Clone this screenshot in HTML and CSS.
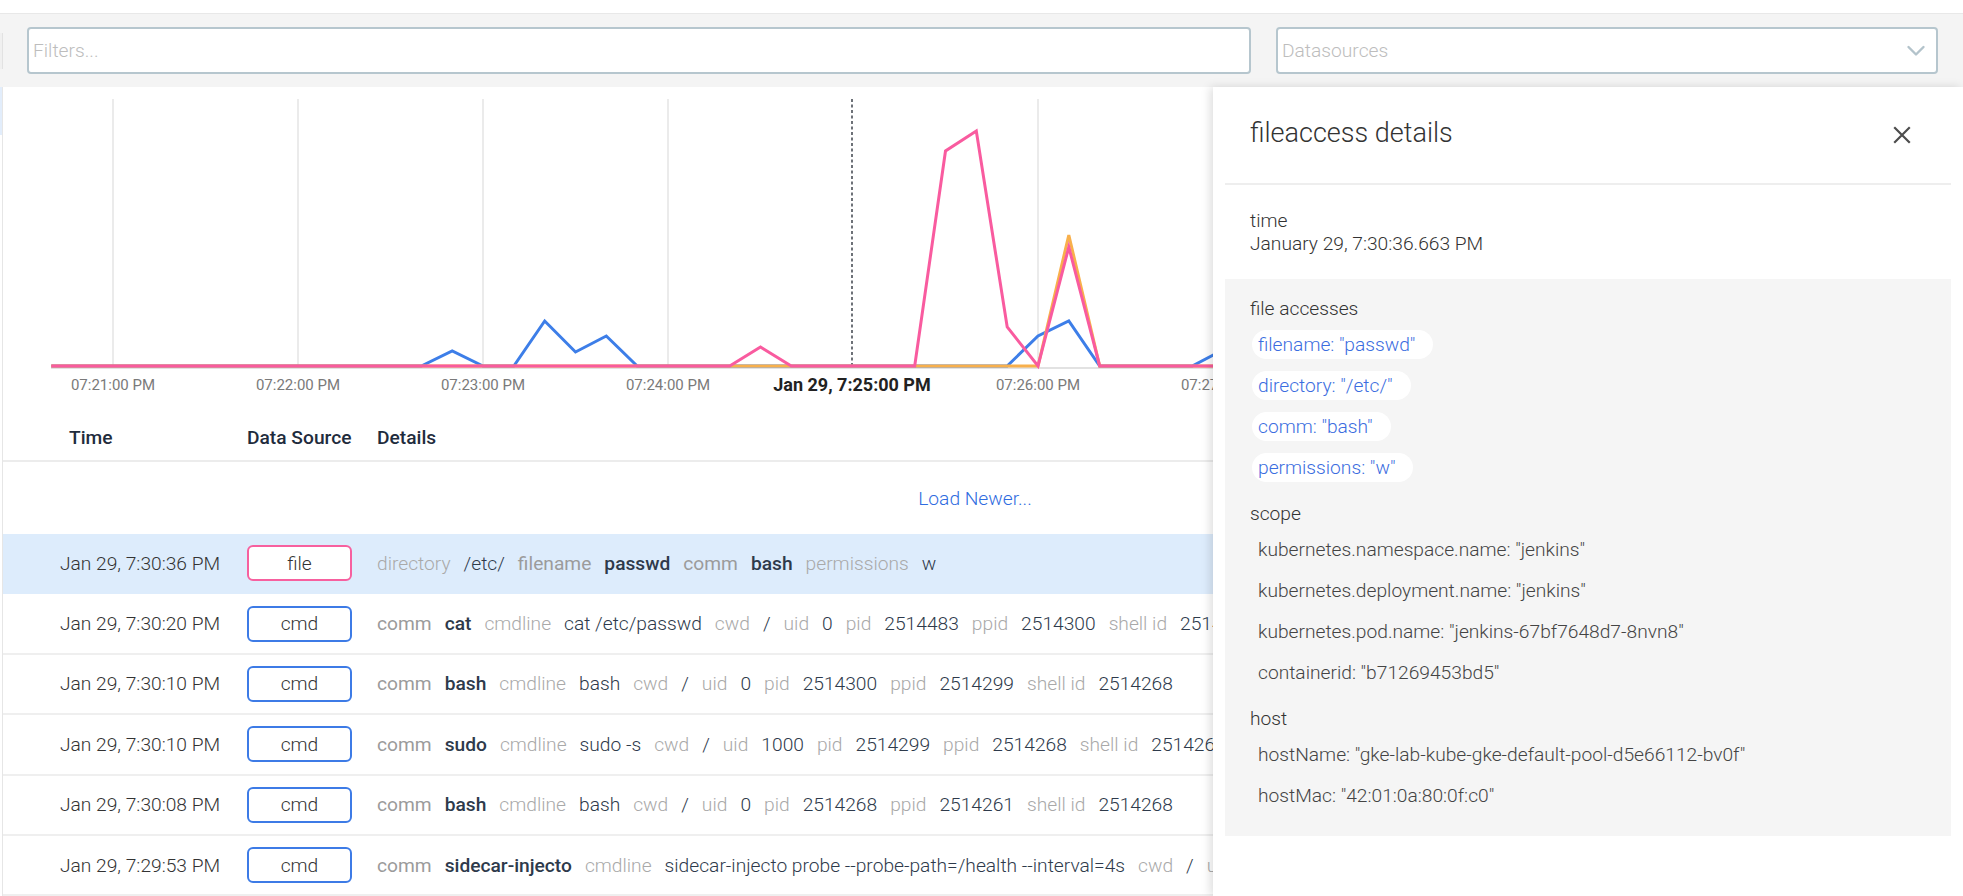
FILE: index.html
```html
<!DOCTYPE html>
<html lang="en">
<head>
<meta charset="utf-8">
<title>Events</title>
<link rel="stylesheet" href="styles.css">
</head>
<body>
<div class="topgap"></div>
<div class="toolbar">
  <div class="tb-edge"></div>
  <div class="field filter"><span class="placeholder">Filters...</span></div>
  <div class="field select">
    <span class="placeholder">Datasources</span>
    <svg class="chev" width="20" height="12" viewBox="0 0 20 12"><path d="M2.5 2 L10 9.5 L17.5 2" fill="none" stroke="#b3c3cb" stroke-width="2.4" stroke-linecap="round" stroke-linejoin="round"/></svg>
  </div>
</div>
<div class="main">
  <div class="edge"><div class="edge-top"></div></div>
  <div class="content">
    <div class="chart">
      <svg class="chart-svg" width="1960" height="323" viewBox="0 0 1960 323">
        <g stroke="#e4e4e4" stroke-width="1.5">
          <line x1="110" y1="12" x2="110" y2="279"/>
          <line x1="295" y1="12" x2="295" y2="279"/>
          <line x1="480" y1="12" x2="480" y2="279"/>
          <line x1="665" y1="12" x2="665" y2="279"/>
          <line x1="1035" y1="12" x2="1035" y2="279"/>
          <line x1="1220" y1="12" x2="1220" y2="279"/>
          <line x1="1405" y1="12" x2="1405" y2="279"/>
          <line x1="1590" y1="12" x2="1590" y2="279"/>
          <line x1="1775" y1="12" x2="1775" y2="279"/>
        </g>
        <line x1="48" y1="281" x2="1960" y2="281" stroke="#e2e2e2" stroke-width="2"/>
        <line x1="849" y1="12" x2="849" y2="279" stroke="#4a4f57" stroke-width="1.6" stroke-dasharray="3 2.5"/>
        <polyline fill="none" stroke="#3d7ee8" stroke-width="3" points="48.3,279 418.3,279 449.2,264 480,279 510.8,279 541.7,234 572.5,265 603.3,249 634.2,279 1004.2,279 1035,249 1065.8,234 1096.7,279 1189.2,279 1220,263 1250.8,279 1960,279"/>
        <polyline fill="none" stroke="#f8b04c" stroke-width="3" points="48.3,279 1035,279 1065.8,148 1096.7,279 1960,279"/>
        <polyline fill="none" stroke="#f95b9f" stroke-width="3" points="48.3,279 726.7,279 757.5,260 788.3,279 911.7,279 942.5,64 973.3,44 1004.2,240 1035,279 1065.8,160 1096.7,279 1960,279"/>
        <g class="axis-label" text-anchor="middle">
          <text x="110" y="303">07:21:00 PM</text>
          <text x="295" y="303">07:22:00 PM</text>
          <text x="480" y="303">07:23:00 PM</text>
          <text x="665" y="303">07:24:00 PM</text>
          <text x="1035" y="303">07:26:00 PM</text>
          <text x="1220" y="303">07:27:00 PM</text>
        </g>
        <text class="axis-current" x="849" y="304" text-anchor="middle">Jan 29, 7:25:00 PM</text>
      </svg>
    </div>

    <div class="thead">
      <div class="th th-time">Time</div>
      <div class="th">Data Source</div>
      <div class="th">Details</div>
    </div>

    <div class="load"><span class="load-link">Load Newer...</span></div>

    <div class="row selected">
      <div class="c-time">Jan 29, 7:30:36 PM</div>
      <div class="c-src"><span class="badge badge-file">file</span></div>
      <div class="c-det"><span class="k">directory</span><span class="v">/etc/</span><span class="k k2">filename</span><span class="v b">passwd</span><span class="k k2">comm</span><span class="v b">bash</span><span class="k">permissions</span><span class="v">w</span></div>
    </div>
    <div class="row">
      <div class="c-time">Jan 29, 7:30:20 PM</div>
      <div class="c-src"><span class="badge badge-cmd">cmd</span></div>
      <div class="c-det"><span class="k k2">comm</span><span class="v b">cat</span><span class="k">cmdline</span><span class="v">cat /etc/passwd</span><span class="k">cwd</span><span class="v">/</span><span class="k">uid</span><span class="v">0</span><span class="k">pid</span><span class="v">2514483</span><span class="k">ppid</span><span class="v">2514300</span><span class="k">shell id</span><span class="v">2514268</span></div>
    </div>
    <div class="row">
      <div class="c-time">Jan 29, 7:30:10 PM</div>
      <div class="c-src"><span class="badge badge-cmd">cmd</span></div>
      <div class="c-det"><span class="k k2">comm</span><span class="v b">bash</span><span class="k">cmdline</span><span class="v">bash</span><span class="k">cwd</span><span class="v">/</span><span class="k">uid</span><span class="v">0</span><span class="k">pid</span><span class="v">2514300</span><span class="k">ppid</span><span class="v">2514299</span><span class="k">shell id</span><span class="v">2514268</span></div>
    </div>
    <div class="row">
      <div class="c-time">Jan 29, 7:30:10 PM</div>
      <div class="c-src"><span class="badge badge-cmd">cmd</span></div>
      <div class="c-det"><span class="k k2">comm</span><span class="v b">sudo</span><span class="k">cmdline</span><span class="v">sudo -s</span><span class="k">cwd</span><span class="v">/</span><span class="k">uid</span><span class="v">1000</span><span class="k">pid</span><span class="v">2514299</span><span class="k">ppid</span><span class="v">2514268</span><span class="k">shell id</span><span class="v">2514268</span></div>
    </div>
    <div class="row">
      <div class="c-time">Jan 29, 7:30:08 PM</div>
      <div class="c-src"><span class="badge badge-cmd">cmd</span></div>
      <div class="c-det"><span class="k k2">comm</span><span class="v b">bash</span><span class="k">cmdline</span><span class="v">bash</span><span class="k">cwd</span><span class="v">/</span><span class="k">uid</span><span class="v">0</span><span class="k">pid</span><span class="v">2514268</span><span class="k">ppid</span><span class="v">2514261</span><span class="k">shell id</span><span class="v">2514268</span></div>
    </div>
    <div class="row">
      <div class="c-time">Jan 29, 7:29:53 PM</div>
      <div class="c-src"><span class="badge badge-cmd">cmd</span></div>
      <div class="c-det"><span class="k k2">comm</span><span class="v b">sidecar-injecto</span><span class="k">cmdline</span><span class="v">sidecar-injecto probe --probe-path=/health --interval=4s</span><span class="k">cwd</span><span class="v">/</span><span class="k">uid</span><span class="v">0</span><span class="k">pid</span><span class="v">2514102</span></div>
    </div>
  </div>
</div>

<aside class="panel">
  <div class="p-head">
    <div class="p-title">fileaccess details</div>
    <svg class="p-close" width="18" height="18" viewBox="0 0 18 18"><path d="M2 2 L16 16 M16 2 L2 16" stroke="#4d4d4d" stroke-width="2.2" stroke-linecap="square"/></svg>
  </div>
  <div class="p-divider"></div>
  <div class="p-time">
    <div class="g-label">time</div>
    <div class="g-label">January 29, 7:30:36.663 PM</div>
  </div>
  <div class="p-gray">
    <div class="group">
      <div class="g-label">file accesses</div>
      <div class="chips">
        <span class="chip">filename: "passwd"</span>
        <span class="chip">directory: "/etc/"</span>
        <span class="chip">comm: "bash"</span>
        <span class="chip">permissions: "w"</span>
      </div>
    </div>
    <div class="group">
      <div class="g-label">scope</div>
      <div class="chips">
        <span class="chip plain">kubernetes.namespace.name: "jenkins"</span>
        <span class="chip plain">kubernetes.deployment.name: "jenkins"</span>
        <span class="chip plain">kubernetes.pod.name: "jenkins-67bf7648d7-8nvn8"</span>
        <span class="chip plain">containerid: "b71269453bd5"</span>
      </div>
    </div>
    <div class="group">
      <div class="g-label">host</div>
      <div class="chips">
        <span class="chip plain">hostName: "gke-lab-kube-gke-default-pool-d5e66112-bv0f"</span>
        <span class="chip plain">hostMac: "42:01:0a:80:0f:c0"</span>
      </div>
    </div>
  </div>
</aside>
</body>
</html>
```

FILE: styles.css
```css
html, body {
  margin: 0;
  padding: 0;
  overflow: hidden;
  height: 896px;
}
body {
  position: relative;
  font-family: Roboto, "Noto Sans", "Liberation Sans", sans-serif;
  font-size: 19.2px;
  font-weight: 300;
  color: #333;
  background: #fff;
}

.topgap {
  height: 13px;
  background: #fff;
}

.toolbar {
  height: 73px;
  border-top: 1px solid #e8e8e8;
  background: #f4f4f4;
  display: flex;
  align-items: center;
  padding-right: 25px;
}
.tb-edge {
  flex: 0 0 2px;
  height: 36px;
  background: #f0f0f0;
  border-right: 1px solid #e2e2e2;
}
.field {
  box-sizing: border-box;
  height: 47px;
  border: 2px solid #b6c6ce;
  border-radius: 4px;
  background: #fff;
  display: flex;
  align-items: center;
  padding: 0 4px;
}
.filter {
  flex: 0 0 1224px;
  margin-left: 24px;
}
.select {
  flex: 1;
  margin-left: 25px;
  justify-content: space-between;
  padding-right: 10px;
}
.placeholder {
  color: #bdbdbd;
  font-weight: 300;
  font-size: 19.2px;
}
.chev {
  display: block;
}

.main {
  display: flex;
}
.edge {
  flex: 0 0 2px;
  border-right: 1px solid #e6e6e6;
  background: #fff;
}
.edge-top {
  height: 48px;
  background: #e2edfb;
}
.content {
  flex: 1;
  min-width: 0;
}

.chart {
  height: 323px;
}
.chart-svg {
  display: block;
}
.axis-label {
  font-family: Roboto, "Liberation Sans", sans-serif;
  font-size: 15px;
  font-weight: 400;
  fill: #7a7a7a;
}
.axis-current {
  font-family: Roboto, "Liberation Sans", sans-serif;
  font-size: 18px;
  font-weight: 700;
  fill: #222;
}

.thead {
  display: grid;
  grid-template-columns: 244px 130px 1fr;
  align-items: center;
  box-sizing: border-box;
  height: 52px;
  padding-top: 4px;
  border-bottom: 2px solid #ececec;
}
.th {
  font-weight: 500;
  color: #1f2c3d;
}
.th-time {
  padding-left: 66px;
}

.load {
  height: 72px;
  display: flex;
  align-items: center;
  justify-content: center;
  padding-right: 16px;
}
.load-link {
  color: #2f6ce0;
  font-weight: 300;
}

.row {
  display: grid;
  grid-template-columns: 244px 130px 1fr;
  align-items: center;
  height: 58.4px;
  border-bottom: 2px solid #efefef;
}
.row.selected {
  background: #ddecfc;
  border-bottom-color: #ddecfc;
}
.c-time {
  padding-left: 57px;
  color: #333;
  white-space: nowrap;
}
.badge {
  box-sizing: border-box;
  width: 105px;
  height: 36px;
  border: 2px solid #3d7be6;
  border-radius: 6px;
  background: #fff;
  display: flex;
  align-items: center;
  justify-content: center;
  color: #333;
  font-weight: 300;
}
.badge-file {
  border-color: #f7609f;
}
.c-det {
  white-space: nowrap;
  overflow: hidden;
}
.k, .v {
  display: inline-block;
  margin-right: 13px;
}
.k {
  color: #a9a9a9;
  font-weight: 300;
}
.k2 {
  color: #9b9b9b;
  font-weight: 400;
}
.v {
  color: #2e3a4b;
  font-weight: 300;
}
.v.b {
  font-weight: 500;
}

.panel {
  position: absolute;
  top: 87px;
  left: 1213px;
  width: 750px;
  height: 809px;
  background: #fff;
  box-shadow: -3px 0 9px rgba(0, 0, 0, 0.13);
}
.p-head {
  height: 92px;
  display: flex;
  align-items: center;
  justify-content: space-between;
  padding: 0 52px 0 37px;
}
.p-title {
  font-size: 27px;
  font-weight: 300;
  color: #333;
}
.p-close {
  display: block;
  margin-top: 4px;
}
.p-divider {
  height: 2px;
  background: #eeeeee;
  margin: 4px 12px 0;
}
.p-time {
  padding: 24px 37px;
}
.g-label {
  line-height: 23px;
  color: #333;
  font-weight: 300;
}
.p-gray {
  margin: 0 12px;
  background: #f5f5f5;
  padding: 18px 25px 26px;
}
.group + .group {
  margin-top: 20px;
}
.chips {
  display: flex;
  flex-direction: column;
  align-items: flex-start;
  gap: 12px;
  margin-top: 10px;
  padding-left: 2px;
}
.chip {
  height: 29px;
  line-height: 29px;
  padding: 0 18px 0 6px;
  border-radius: 15px;
  background: #fff;
  color: #3b6de0;
  font-weight: 300;
  white-space: nowrap;
}
.chip.plain {
  background: transparent;
  color: #444;
}
```
